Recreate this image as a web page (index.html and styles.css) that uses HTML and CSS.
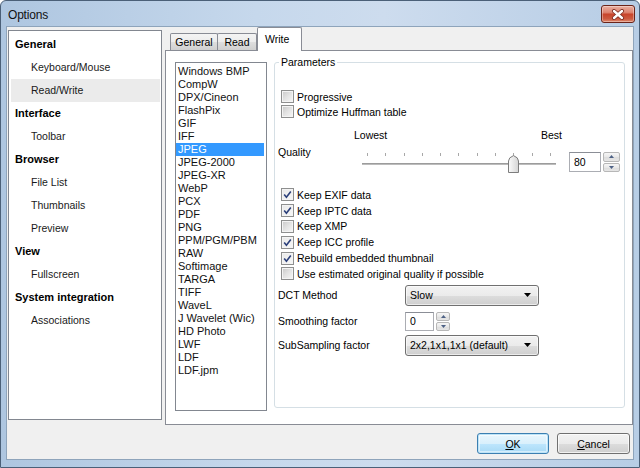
FILE: index.html
```html
<!DOCTYPE html>
<html>
<head>
<meta charset="utf-8">
<title>Options</title>
<link rel="stylesheet" href="styles.css">
</head>
<body>
<div class="window">
  <div class="titlebar">
    <span class="title">Options</span>
    <div class="close">
      <svg width="14" height="11" viewBox="0 0 14 11"><path d="M3 2 L11 9 M11 2 L3 9" stroke="#7a2a1e" stroke-width="4" stroke-linecap="round"/><path d="M3 2 L11 9 M11 2 L3 9" stroke="#ffffff" stroke-width="2.4" stroke-linecap="round"/></svg>
    </div>
  </div>
  <div class="client">
    <div class="main">
      <div class="nav">
        <div class="nav-row nav-h">General</div>
        <div class="nav-row nav-i">Keyboard/Mouse</div>
        <div class="nav-row nav-i sel">Read/Write</div>
        <div class="nav-row nav-h">Interface</div>
        <div class="nav-row nav-i">Toolbar</div>
        <div class="nav-row nav-h">Browser</div>
        <div class="nav-row nav-i">File List</div>
        <div class="nav-row nav-i">Thumbnails</div>
        <div class="nav-row nav-i">Preview</div>
        <div class="nav-row nav-h">View</div>
        <div class="nav-row nav-i">Fullscreen</div>
        <div class="nav-row nav-h">System integration</div>
        <div class="nav-row nav-i">Associations</div>
      </div>
      <div class="tabs">
        <div class="tabstrip">
          <div class="tab t-general">General</div>
          <div class="tab t-read">Read</div>
          <div class="tab active">Write</div>
        </div>
        <div class="tabpanel">
          <div class="listbox">
            <div class="li">Windows BMP</div>
            <div class="li">CompW</div>
            <div class="li">DPX/Cineon</div>
            <div class="li">FlashPix</div>
            <div class="li">GIF</div>
            <div class="li">IFF</div>
            <div class="li sel">JPEG</div>
            <div class="li">JPEG-2000</div>
            <div class="li">JPEG-XR</div>
            <div class="li">WebP</div>
            <div class="li">PCX</div>
            <div class="li">PDF</div>
            <div class="li">PNG</div>
            <div class="li">PPM/PGM/PBM</div>
            <div class="li">RAW</div>
            <div class="li">Softimage</div>
            <div class="li">TARGA</div>
            <div class="li">TIFF</div>
            <div class="li">WaveL</div>
            <div class="li">J Wavelet (Wic)</div>
            <div class="li">HD Photo</div>
            <div class="li">LWF</div>
            <div class="li">LDF</div>
            <div class="li">LDF.jpm</div>
          </div>
          <fieldset class="group">
            <legend>Parameters</legend>
            <div class="checks first">
              <div class="check"><span class="box"></span><span>Progressive</span></div>
              <div class="check"><span class="box"></span><span>Optimize Huffman table</span></div>
            </div>
            <div class="range-labels"><span>Lowest</span><span>Best</span></div>
            <div class="quality">
              <span class="qlabel">Quality</span>
              <div class="slider">
                <div class="ticks"><i></i><i></i><i></i><i></i><i></i><i></i><i></i><i></i><i></i><i></i><i></i></div>
                <div class="track"></div>
                <svg class="thumb" width="11" height="18" viewBox="0 0 11 18">
                  <defs><linearGradient id="tg" x1="0" y1="0" x2="1" y2="0"><stop offset="0" stop-color="#fbfbfb"/><stop offset="1" stop-color="#d4d4d4"/></linearGradient></defs>
                  <path d="M0.5 17.5 V6 Q0.5 2.5 5.5 0.6 Q10.5 2.5 10.5 6 V17.5 Z" fill="url(#tg)" stroke="#7d7d7d"/>
                </svg>
              </div>
              <div class="spin q-spin">
                <div class="edit q-edit">80</div>
                <div class="spinbtns">
                  <div class="sb"><svg width="5" height="3" viewBox="0 0 5 3"><path d="M0 3 L2.5 0 L5 3 Z" fill="#4d6185"/></svg></div>
                  <div class="sb"><svg width="5" height="3" viewBox="0 0 5 3"><path d="M0 0 L2.5 3 L5 0 Z" fill="#4d6185"/></svg></div>
                </div>
              </div>
            </div>
            <div class="checks second">
              <div class="check"><span class="box on"><svg width="9" height="9" viewBox="0 0 9 9"><path d="M1.2 4.6 L3.4 7.2 L7.8 1.4" fill="none" stroke="#2b3f7a" stroke-width="1.6"/></svg></span><span>Keep EXIF data</span></div>
              <div class="check"><span class="box on"><svg width="9" height="9" viewBox="0 0 9 9"><path d="M1.2 4.6 L3.4 7.2 L7.8 1.4" fill="none" stroke="#2b3f7a" stroke-width="1.6"/></svg></span><span>Keep IPTC data</span></div>
              <div class="check"><span class="box"></span><span>Keep XMP</span></div>
              <div class="check"><span class="box on"><svg width="9" height="9" viewBox="0 0 9 9"><path d="M1.2 4.6 L3.4 7.2 L7.8 1.4" fill="none" stroke="#2b3f7a" stroke-width="1.6"/></svg></span><span>Keep ICC profile</span></div>
              <div class="check"><span class="box on"><svg width="9" height="9" viewBox="0 0 9 9"><path d="M1.2 4.6 L3.4 7.2 L7.8 1.4" fill="none" stroke="#2b3f7a" stroke-width="1.6"/></svg></span><span>Rebuild embedded thumbnail</span></div>
              <div class="check"><span class="box"></span><span>Use estimated original quality if possible</span></div>
            </div>
            <div class="field f-dct">
              <span class="flabel">DCT Method</span>
              <div class="combo"><span>Slow</span><svg width="7" height="4" viewBox="0 0 7 4"><path d="M0 0 H7 L3.5 4 Z" fill="#000"/></svg></div>
            </div>
            <div class="field f-smooth">
              <span class="flabel">Smoothing factor</span>
              <div class="spin">
                <div class="edit s-edit">0</div>
                <div class="spinbtns small">
                  <div class="sb"><svg width="5" height="3" viewBox="0 0 5 3"><path d="M0 3 L2.5 0 L5 3 Z" fill="#4d6185"/></svg></div>
                  <div class="sb"><svg width="5" height="3" viewBox="0 0 5 3"><path d="M0 0 L2.5 3 L5 0 Z" fill="#4d6185"/></svg></div>
                </div>
              </div>
            </div>
            <div class="field f-sub">
              <span class="flabel">SubSampling factor</span>
              <div class="combo"><span>2x2,1x1,1x1 (default)</span><svg width="7" height="4" viewBox="0 0 7 4"><path d="M0 0 H7 L3.5 4 Z" fill="#000"/></svg></div>
            </div>
          </fieldset>
        </div>
      </div>
    </div>
    <div class="buttons">
      <button class="btn default"><u>O</u>K</button>
      <button class="btn cancel"><u>C</u>ancel</button>
    </div>
  </div>
</div>
</body>
</html>
```
FILE: styles.css
```css
* { box-sizing: border-box; }
html, body { margin: 0; padding: 0; }
body {
  width: 640px; height: 468px; overflow: hidden;
  font-family: "Liberation Sans", Arial, sans-serif;
  font-size: 10.5px; color: #000; background: #fff;
}
.window {
  width: 640px; height: 468px;
  border: 1px solid #4b6078;
  border-radius: 6px 6px 0 0;
  background: linear-gradient(to right, #aec6e0 0%, #c6d8ec 40%, #cddcee 60%, #b7cde5 100%);
  display: flex; flex-direction: column;
  padding-bottom: 7px;
}
.titlebar {
  height: 25px; flex: none;
  display: flex; align-items: flex-start; justify-content: space-between;
  padding: 4px 4px 0 7px;
}
.title { font-size: 12px; line-height: 19px; padding-top: 1px; color: #111; letter-spacing: -0.2px; }
.close {
  width: 34px; height: 18px;
  border: 1px solid #6b2419; border-radius: 3px;
  background: linear-gradient(#eab0a2 0%, #dd8470 40%, #c8452c 52%, #cc5a40 80%, #e08c70 100%);
  display: flex; align-items: center; justify-content: center;
  box-shadow: inset 0 0 0 1px rgba(255,255,255,0.35);
}
.client {
  flex: 1; margin: 0 5px;
  border: 1px solid #8ea4bb;
  background: #f0f0f0;
  display: flex; flex-direction: column;
}
.main { height: 398px; flex: none; display: flex; padding-left: 1px; }
.nav {
  width: 154px; height: 390px; margin-top: 3px;
  border: 1px solid #828790; background: #fff;
  padding: 2px 1px 0 2px;
}
.nav-row { height: 23px; line-height: 23px; white-space: nowrap; }
.nav-h { font-weight: bold; padding-left: 4px; font-size: 11px; }
.nav-i { padding-left: 20px; color: #1a1a1a; }
.nav-i.sel { background: #ebebeb; }
.tabs { flex: 1; margin-left: 3px; display: flex; flex-direction: column; }
.tabstrip { height: 23px; flex: none; display: flex; align-items: flex-end; padding-left: 5px; }
.tab {
  height: 17px; line-height: 16px; text-align: center;
  border: 1px solid #898c95; border-bottom: none;
  border-radius: 2px 2px 0 0;
  background: linear-gradient(#f4f4f4 0%, #ececec 50%, #dedede 51%, #d0d0d0 100%);
  margin-right: -1px;
}
.t-general { width: 48px; }
.t-read { width: 40px; }
.tab.active {
  width: 45px; height: 24px; line-height: 22px;
  background: #fff; margin-bottom: -1px; margin-left: 1px;
  position: relative; z-index: 1;
  text-align: left; padding-left: 7px;
}
.tabpanel {
  flex: 1; background: #fff;
  border: 1px solid #898c95;
  display: flex; align-items: flex-start;
  padding: 5px 7px 0 9px;
}
.listbox {
  width: 92px; height: 349px; margin-top: 6px;
  border: 1px solid #828790; background: #fff;
  padding-top: 2px; font-size: 11px;
}
.li { height: 13px; line-height: 13px; padding-left: 2px; margin-right: 2px; white-space: nowrap; color: #111; }
.li.sel { background: #3399ff; color: #fff; }
.group {
  width: 351px; height: 352px; margin: 0 0 0 7px;
  border: 1px solid #d5dfe5; border-radius: 3px;
  padding: 0 0 0 3px;
  min-width: 0;
}
.group legend { padding: 0 2px; margin-left: 1px; line-height: 13px; height: 13px; }
.checks.first { margin-top: 20px; }
.check { height: 15px; display: flex; align-items: center; white-space: nowrap; }
.checks.second { margin-top: 13px; }
.checks.second .check { height: 15.8px; }
.box {
  width: 13px; height: 13px; flex: none;
  margin-left: 3px; margin-right: 3px;
  border: 1px solid #8e8f8f;
  background: linear-gradient(135deg, #c8c8c8 0%, #e3e3e3 50%, #f7f7f7 100%);
  box-shadow: inset 0 0 0 1px #f4f4f4;
  display: flex; align-items: center; justify-content: center;
}
.box.on { background: linear-gradient(135deg, #e9e9e9 0%, #f7f7f7 100%); }
.range-labels {
  width: 284px; margin-top: 10px; height: 13px; line-height: 13px;
  display: flex; justify-content: space-between; padding-left: 76px;
}
.quality { height: 28px; margin-top: 4px; display: flex; align-items: flex-start; }
.qlabel { width: 84px; flex: none; line-height: 13px; }
.slider { width: 194px; height: 28px; position: relative; flex: none; }
.ticks {
  display: flex; justify-content: space-between;
  padding: 0 5px; margin-top: 7px; height: 3px;
}
.ticks i { display: block; width: 1px; height: 3px; background: #a8a8a8; }
.track {
  margin-top: 7px; height: 3px;
  background: #bcbcbc; border-bottom: 1px solid #fff;
  border-top: 1px solid #9c9c9c;
}
.thumb { position: absolute; left: 146px; top: 9px; }
.spin { display: flex; align-items: stretch; }
.q-spin { margin-left: 13px; margin-top: 6px; height: 20px; }
.edit {
  border: 1px solid #abadb3; border-top-color: #8b8e96;
  background: #fff; padding-left: 4px;
  display: flex; align-items: center;
}
.q-edit { width: 32px; }
.spinbtns { width: 17px; margin-left: 2px; display: flex; flex-direction: column; gap: 1px; }
.sb {
  flex: 1; border: 1px solid #b7b7b7; border-radius: 2px;
  background: linear-gradient(#f6f6f6 0%, #e8e8e8 50%, #dcdcdc 51%, #e6e6e6 100%);
  display: flex; align-items: center; justify-content: center;
}
.field { display: flex; align-items: center; }
.flabel { width: 127px; flex: none; }
.f-dct { margin-top: 3px; height: 21px; }
.f-smooth { margin-top: 6px; height: 19px; }
.f-sub { margin-top: 4px; height: 21px; }
.combo {
  width: 134px; height: 21px;
  border: 1px solid #707070; border-radius: 3px;
  background: linear-gradient(#f2f2f2 0%, #ebebeb 50%, #dddddd 51%, #cfcfcf 100%);
  display: flex; align-items: center; justify-content: space-between;
  padding: 0 7px 0 4px;
  box-shadow: inset 0 0 0 1px rgba(255,255,255,0.6);
}
.f-smooth .spin { height: 19px; }
.s-edit { width: 29px; }
.spinbtns.small { width: 14px; }
.buttons {
  display: flex; justify-content: flex-end; gap: 8px;
  margin-top: 8px; padding-right: 3px;
}
.btn {
  width: 73px; height: 21px; padding: 0;
  font-family: "Liberation Sans", Arial, sans-serif; font-size: 10.5px; color: #000;
  border: 1px solid #707070; border-radius: 3px;
  background: linear-gradient(#f2f2f2 0%, #ebebeb 50%, #dddddd 51%, #cfcfcf 100%);
  box-shadow: inset 0 0 0 1px rgba(255,255,255,0.7);
}
.btn.default {
  width: 72px;
  border-color: #3c7fb1;
  background: linear-gradient(#eaf6fd 0%, #d9f0fc 50%, #bee6fd 51%, #a7d9f5 100%);
  box-shadow: inset 0 0 0 1px #bde4f8, inset 0 0 0 2px rgba(255,255,255,0.5);
}
.btn u { text-decoration: underline; }
```
